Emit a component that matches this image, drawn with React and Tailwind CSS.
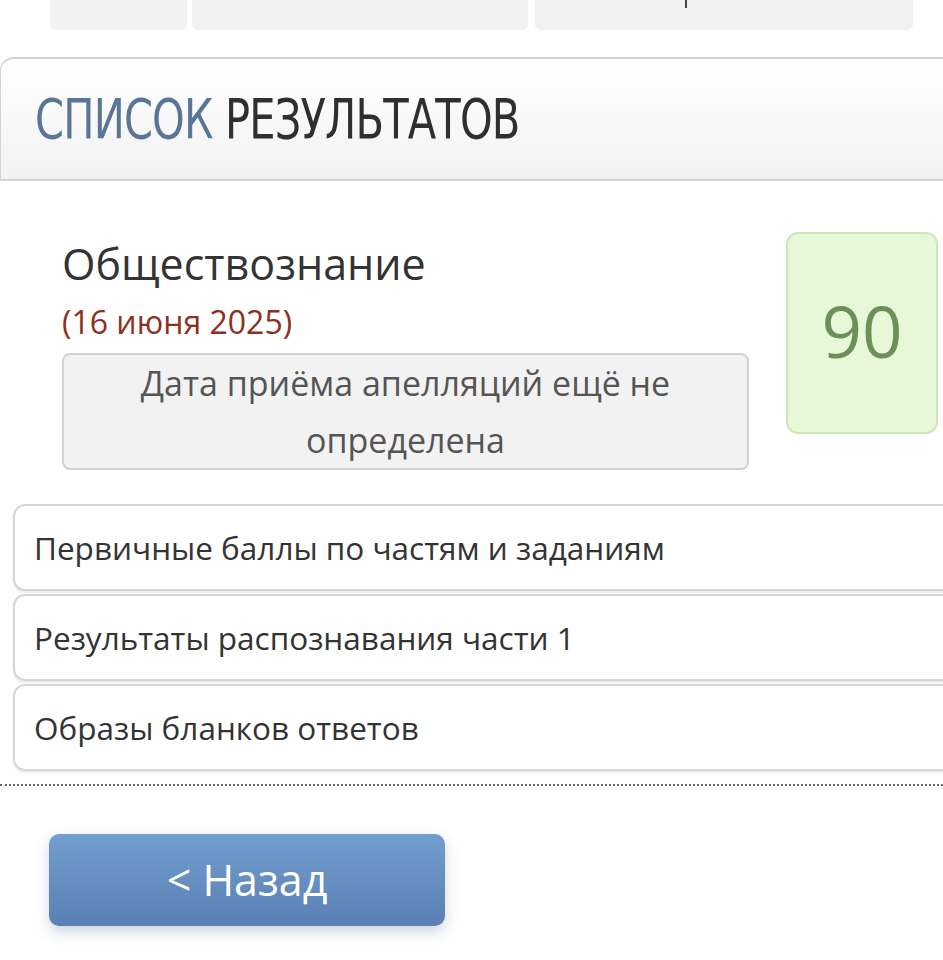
export default function App() {
  const links = [
    'Первичные баллы по частям и заданиям',
    'Результаты распознавания части 1',
    'Образы бланков ответов',
  ]

  return (
    <div className="min-h-[960px] w-[943px] overflow-hidden bg-white font-['Open_Sans',sans-serif] text-[#333]">
      {/* tab strip cut off at the top */}
      <div className="flex h-[30px] pl-[50px] pr-[30px]">
        <div className="w-[137px] rounded-b-[6px] bg-[#f1f1f1]" />
        <div className="ml-[5px] w-[336px] rounded-b-[6px] bg-[#f1f1f1]" />
        <div className="relative ml-[7px] flex-1 rounded-b-[6px] bg-[#f1f1f1]">
          <span className="absolute left-[150px] top-0 h-[8px] w-[2px] bg-[#444]" />
        </div>
      </div>

      {/* section header */}
      <div className="mt-[27px] mr-[-20px] flex h-[124px] items-center rounded-tl-[14px] border-y-2 border-l border-[#d4d4d4] bg-gradient-to-b from-white to-[#f2f2f2] pl-[34px]">
        <h1 className="origin-left scale-x-[0.825] whitespace-nowrap font-['DejaVu_Sans_Condensed','DejaVu_Sans',sans-serif] text-[56px] leading-none tracking-[-1px]">
          <span className="text-[#5b7597]">СПИСОК</span>{' '}
          <span className="text-[#2f2f2f]">РЕЗУЛЬТАТОВ</span>
        </h1>
      </div>

      {/* subject card */}
      <div className="mt-[51px] flex pl-[62px] pr-[5px]">
        <div className="w-[687px] pt-[7px]">
          <div className="text-[43px] leading-[50px] text-[#333]">Обществознание</div>
          <div className="mt-[14px] text-[32px] leading-[38px] text-[#8a321e]">(16 июня 2025)</div>
          <div className="mt-[12px] rounded-[8px] border-2 border-[#d2d2d2] bg-[#f2f2f2] px-4 text-center text-[34px] leading-[56.5px] text-[#555]">
            Дата приёма апелляций ещё не определена
          </div>
        </div>
        <div className="ml-auto flex h-[202px] w-[152px] items-center justify-center rounded-[12px] border-2 border-[#cfe5bd] bg-[#e6f8d8] pb-[4px] text-[71px] text-[#6d8f58]">
          90
        </div>
      </div>

      {/* links list */}
      <div className="mt-[34px] ml-[13px] mr-[-20px] flex flex-col gap-[3px]">
        {links.map((label) => (
          <div
            key={label}
            className="flex h-[87px] items-center rounded-l-[12px] border-2 border-[#d6d6d6] pl-[19px] text-[31.5px] text-[#333] shadow-[0_2px_2px_rgba(0,0,0,0.08)]"
          >
            {label}
          </div>
        ))}
      </div>

      <div className="mt-[13px] border-t-2 border-dotted border-[#666]" />

      <button
        type="button"
        className="mt-[48px] ml-[49px] flex h-[92px] w-[396px] items-center justify-center rounded-[10px] bg-gradient-to-b from-[#729ed0] to-[#5a7fb3] text-[43px] text-white shadow-[0_6px_14px_rgba(60,90,140,0.25)]"
      >
        &lt; Назад
      </button>
    </div>
  )
}
